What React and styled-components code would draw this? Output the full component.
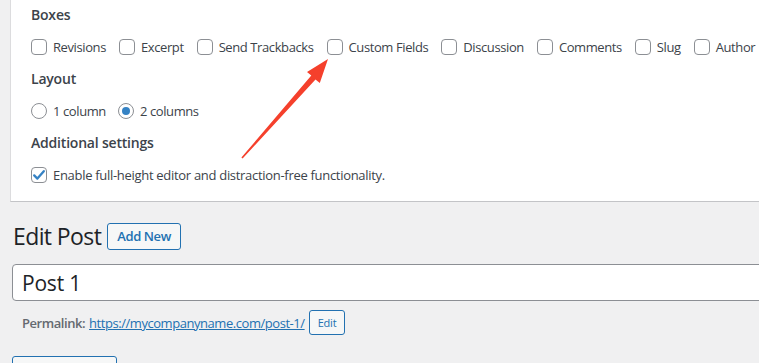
import React from "react";
import styled, { createGlobalStyle } from "styled-components";

const Global = createGlobalStyle`
  html, body { margin: 0; padding: 0; background: #f0f0f1; overflow: hidden; }
  body { font-family: "Open Sans", "Noto Sans", sans-serif; font-size: 13px; color: #3c434a; }
  * { box-sizing: border-box; }
`;

const Page = styled.div`
  position: relative;
  width: 759px;
  height: 363px;
  overflow: hidden;
`;

const Panel = styled.div`
  margin-left: 10px;
  width: 900px;
  background: #fff;
  border-left: 1px solid #dcdcde;
  border-bottom: 1px solid #c3c4c7;
  padding: 5px 20px 14px;
`;

const Legend = styled.div`
  font-size: 14px;
  font-weight: 600;
  line-height: 20px;
  color: #3c434a;
  letter-spacing: -0.2px;
  margin-top: ${(p) => p.$mt || 0}px;
`;

const OptionRow = styled.div`
  display: flex;
  align-items: center;
  height: 24px;
  margin-top: 10px;
  gap: ${(p) => p.$gap || 13}px;
  white-space: nowrap;
`;

const Option = styled.label`
  display: flex;
  align-items: center;
  gap: 6px;
  font-size: 13px;
  color: #3c434a;
  letter-spacing: ${(p) => p.$ls || "-0.4px"};
`;

const Box = styled.span`
  display: inline-flex;
  align-items: center;
  justify-content: center;
  width: 16px;
  height: 16px;
  border: 1px solid #8c8f94;
  border-radius: 4px;
  background: #fff;
  flex: none;
`;

const Radio = styled.span`
  display: inline-flex;
  align-items: center;
  justify-content: center;
  width: 16px;
  height: 16px;
  border: 1px solid #8c8f94;
  border-radius: 50%;
  background: #fff;
  flex: none;
  &::after {
    content: "";
    display: ${(p) => (p.$checked ? "block" : "none")};
    width: 8px;
    height: 8px;
    border-radius: 50%;
    background: #3582c4;
  }
`;

const Main = styled.div`
  padding-left: 12px;
  padding-top: 21px;
`;

const TitleRow = styled.div`
  display: flex;
  align-items: center;
  gap: 6px;
  height: 26px;
`;

const H1 = styled.h1`
  margin: 0 0 0 1px;
  font-size: 23px;
  font-weight: 400;
  color: #1d2327;
  line-height: 26px;
  letter-spacing: -0.6px;
`;

const OutlineButton = styled.button`
  font-family: inherit;
  font-size: ${(p) => (p.$small ? "11px" : "13px")};
  font-weight: ${(p) => (p.$small ? 400 : 600)};
  color: #2271b1;
  background: #f6f7f7;
  border: 1px solid #2271b1;
  border-radius: 3px;
  height: ${(p) => (p.$small ? "25px" : "27px")};
  padding: 0 ${(p) => (p.$small ? "8px" : "9px")};
  line-height: 1;
  cursor: pointer;
  letter-spacing: ${(p) => (p.$small ? "-0.2px" : "-0.4px")};
`;

const TitleInput = styled.div`
  margin-top: 15px;
  width: 900px;
  height: 37px;
  border: 1px solid #8c8f94;
  border-radius: 4px;
  background: #fff;
  display: flex;
  align-items: center;
  padding-left: 9px;
  font-size: 21px;
  color: #1d2327;
  letter-spacing: -0.2px;
`;

const SlugRow = styled.div`
  display: flex;
  align-items: center;
  gap: 4px;
  margin-top: 9px;
  padding-left: 10px;
  font-size: 13px;
  color: #646970;
  white-space: nowrap;
  letter-spacing: -0.45px;
`;

const SlugLabel = styled.strong`
  font-weight: 600;
`;

const SlugLink = styled.a`
  color: #2271b1;
  text-decoration: underline;
`;

const BottomButton = styled.div`
  margin-top: 21px;
  width: 105px;
  height: 30px;
  border: 1px solid #2271b1;
  border-radius: 3px;
  background: #f6f7f7;
`;

const Arrow = styled.svg`
  position: absolute;
  left: 0;
  top: 0;
  pointer-events: none;
`;

const Check = ({ checked }) => (
  <Box>
    {checked && (
      <svg width="14" height="14" viewBox="0 0 14 14">
        <path d="M2.2 7.4 L5.4 10.6 L11.8 3.2" fill="none" stroke="#3582c4" strokeWidth="2.3" strokeLinecap="round" strokeLinejoin="round" />
      </svg>
    )}
  </Box>
);

const boxes = ["Revisions", "Excerpt", "Send Trackbacks", "Custom Fields", "Discussion", "Comments", "Slug", "Author"];

export default function App() {
  return (
    <Page>
      <Global />
      <Panel>
        <Legend>Boxes</Legend>
        <OptionRow>
          {boxes.map((b) => (
            <Option key={b}>
              <Check />
              {b}
            </Option>
          ))}
        </OptionRow>
        <Legend $mt={10}>Layout</Legend>
        <OptionRow $gap={12}>
          <Option>
            <Radio />1 column
          </Option>
          <Option>
            <Radio $checked />2 columns
          </Option>
        </OptionRow>
        <Legend $mt={10}>Additional settings</Legend>
        <OptionRow>
          <Option $ls="-0.3px">
            <Check checked />
            Enable full-height editor and distraction-free functionality.
          </Option>
        </OptionRow>
      </Panel>
      <Main>
        <TitleRow>
          <H1>Edit Post</H1>
          <OutlineButton>Add New</OutlineButton>
        </TitleRow>
        <TitleInput>Post 1</TitleInput>
        <SlugRow>
          <SlugLabel>Permalink:</SlugLabel>
          <SlugLink href="#">https://mycompanyname.com/post-1/</SlugLink>
          <OutlineButton $small>Edit</OutlineButton>
        </SlugRow>
        <BottomButton />
      </Main>
      <Arrow width="759" height="363" viewBox="0 0 759 363">
        <polygon
          points="241.4,157.5 311.3,75.6 307,71.9 328,59 319.8,83.1 315.5,79.4 242.6,158.5"
          fill="#f5402c"
        />
      </Arrow>
    </Page>
  );
}
